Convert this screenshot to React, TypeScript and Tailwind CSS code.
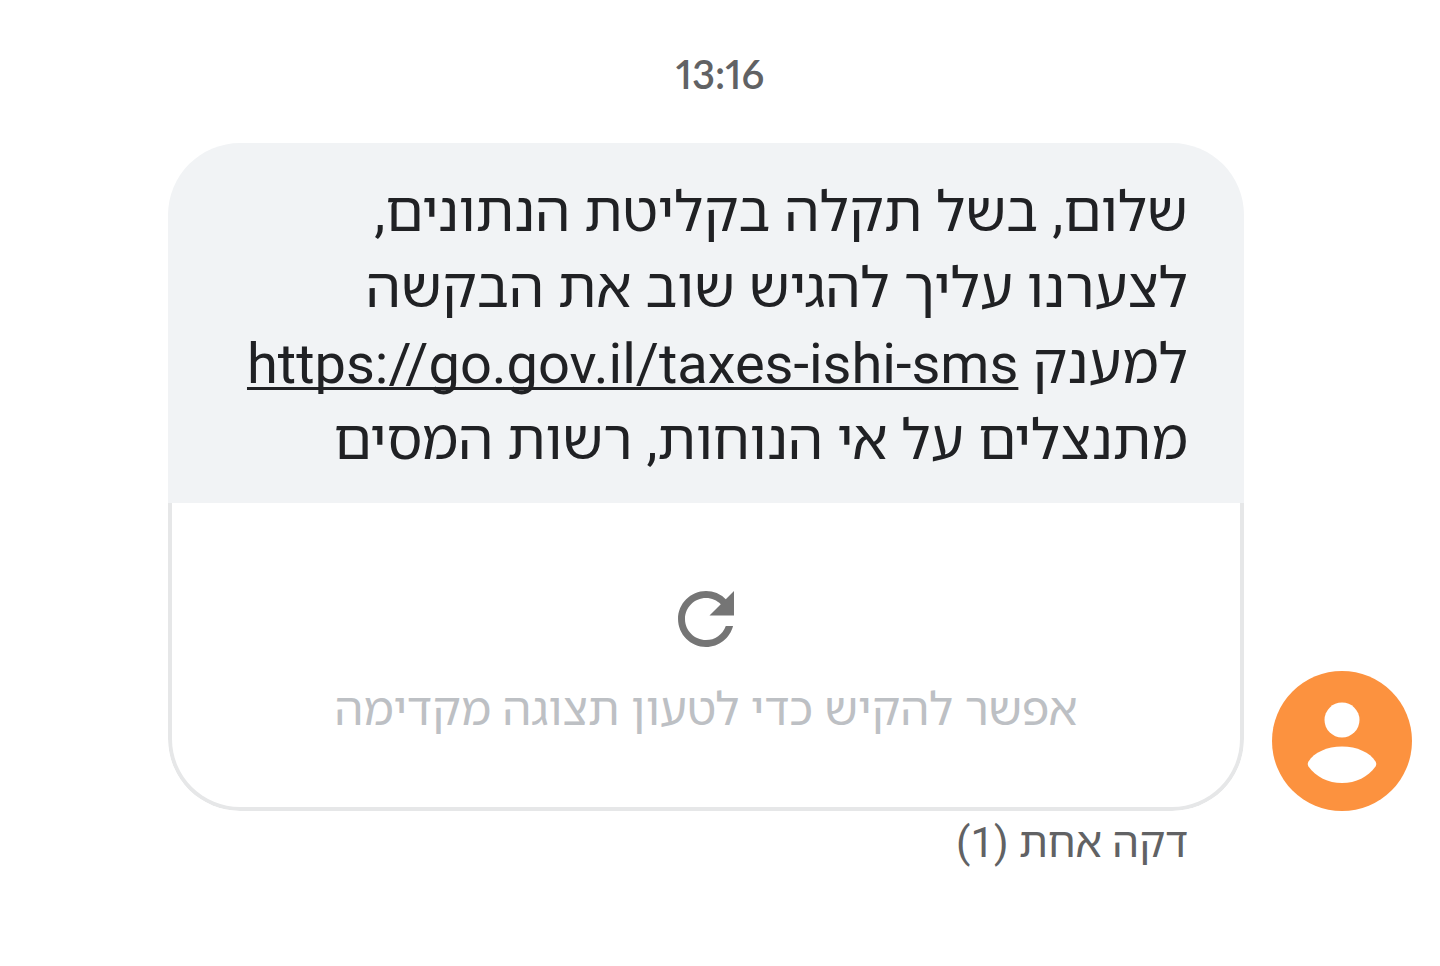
import { MdRefresh } from 'react-icons/md';

const LINK = 'https://go.gov.il/taxes-ishi-sms';

const TEXT_FONT = "font-['Roboto','Noto_Sans_Hebrew','Open_Sans',sans-serif]";

function Avatar() {
  return (
    <svg viewBox="0 0 140 140" className="size-[140px] shrink-0" role="img" aria-label="איש קשר">
      <circle cx="70" cy="70" r="70" fill="#fc923f" />
      <circle cx="70" cy="49" r="17.5" fill="#fff" />
      <path
        d="M36.5 90.5C42 81.500 55 75.500 70 75.500s28 6 33.500 15q1.500 2.500 0 5C96 106 84 112 70 112s-26-6-33.500-16.500q-1.500-2.500 0-5z"
        fill="#fff"
      />
    </svg>
  );
}

function MessageBubble() {
  return (
    <article className="min-w-0 flex-1 overflow-hidden rounded-[72px] bg-white">
      <p className="bg-[#f1f3f5] px-14 pt-[31px] pb-[25px] text-[56px] leading-[76px] text-[#202124]">
        שלום, בשל תקלה בקליטת הנתונים,
        <br />
        לצערנו עליך להגיש שוב את הבקשה
        <br />
        למענק{' '}
        <a
          href={LINK}
          dir="ltr"
          className="underline decoration-[3px] underline-offset-4 [text-decoration-skip-ink:none]"
        >
          {LINK}
        </a>
        <br />
        מתנצלים על אי הנוחות, רשות המסים
      </p>
      <button
        type="button"
        className="flex w-full flex-col items-center rounded-b-[72px] border-4 border-t-0 border-[#e6e7e8] pt-[74px] pb-[68px] text-[#bdc0c4]"
      >
        <MdRefresh className="size-[84px] text-[#757575]" />
        <span className="mt-[18px] text-[46px] leading-[60px]">אפשר להקיש כדי לטעון תצוגה מקדימה</span>
      </button>
    </article>
  );
}

export default function App() {
  return (
    <main dir="rtl" lang="he" className={`min-h-screen bg-white pt-[46px] ${TEXT_FONT}`}>
      <time className="block text-center font-['Lato',sans-serif] text-[40px] leading-[56px] font-semibold proportional-nums text-[#616264]">
        13:16
      </time>
      <div className="mt-[41px] flex items-end gap-7 pr-7 pl-[168px]">
        <Avatar />
        <MessageBubble />
      </div>
      <p className="pt-1 pr-[252px] text-[42px] leading-[56px] text-[#616264]">דקה אחת (1)</p>
    </main>
  );
}
